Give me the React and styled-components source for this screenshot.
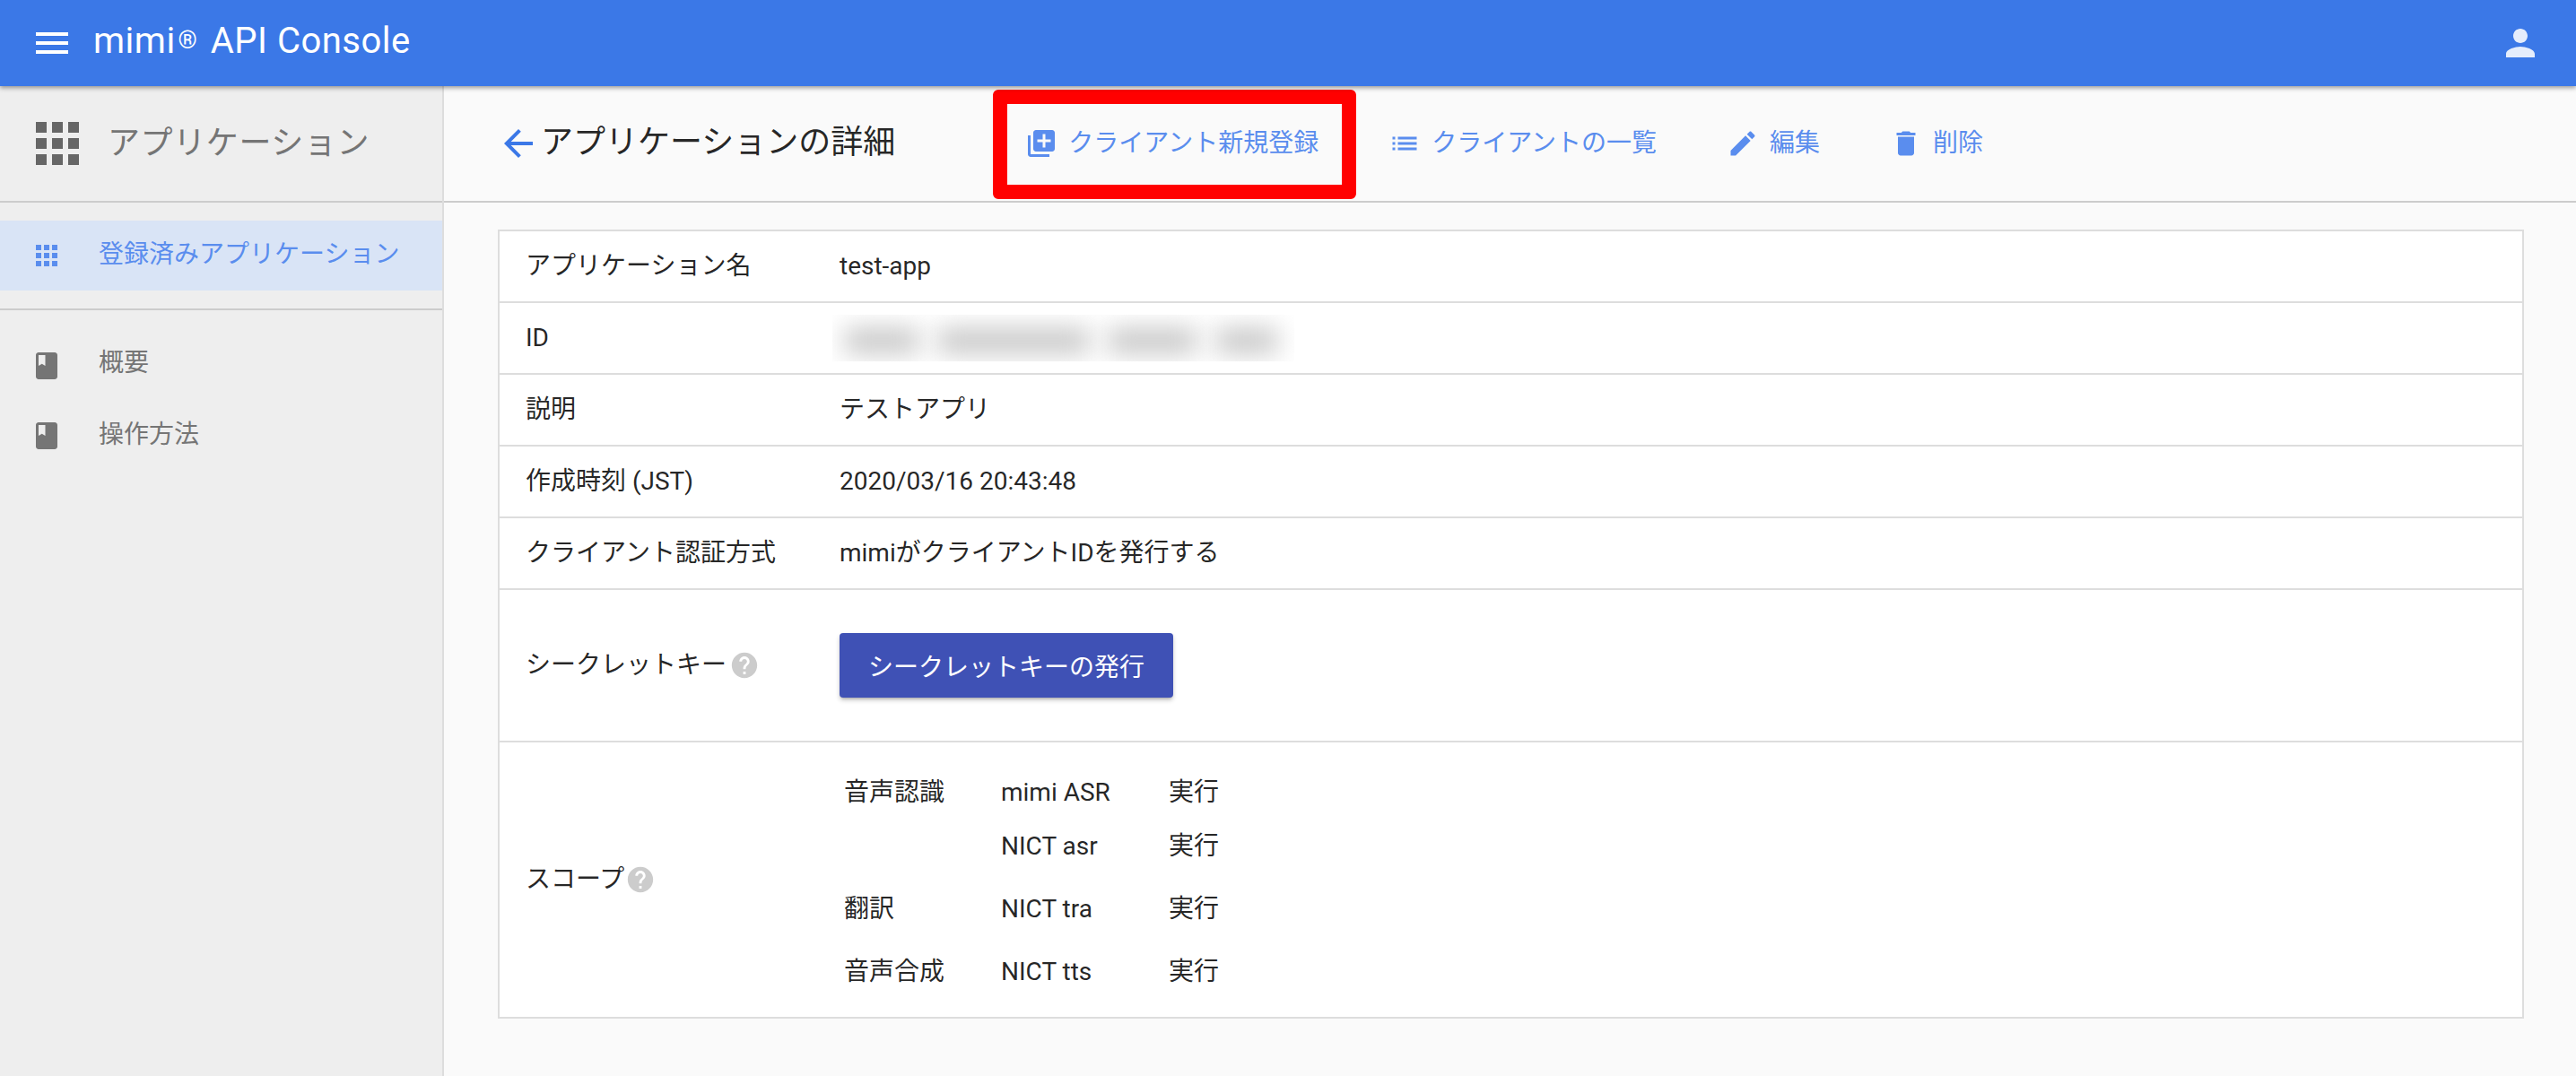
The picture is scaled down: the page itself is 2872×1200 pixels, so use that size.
import React from "react";
import styled, { createGlobalStyle } from "styled-components";

const P = {
  menu: "M3 18h18v-2H3v2zm0-5h18v-2H3v2zm0-7v2h18V6H3z",
  person: "M12 12c2.21 0 4-1.79 4-4s-1.79-4-4-4-4 1.79-4 4 1.79 4 4 4zm0 2c-2.67 0-8 1.34-8 4v2h16v-2c0-2.66-5.33-4-8-4z",
  apps: "M4 8h4V4H4v4zm6 12h4v-4h-4v4zm-6 0h4v-4H4v4zm0-6h4v-4H4v4zm6 0h4v-4h-4v4zm6-10v4h4V4h-4zm-6 4h4V4h-4v4zm6 6h4v-4h-4v4zm0 6h4v-4h-4v4z",
  book: "M18 2H6c-1.1 0-2 .9-2 2v16c0 1.1.9 2 2 2h12c1.1 0 2-.9 2-2V4c0-1.1-.9-2-2-2zM6 4h5v8l-2.5-1.5L6 12V4z",
  back: "M20 11H7.83l5.59-5.59L12 4l-8 8 8 8 1.41-1.41L7.83 13H20v-2z",
  add: "M4 6H2v14c0 1.1.9 2 2 2h14v-2H4V6zm16-4H8c-1.1 0-2 .9-2 2v12c0 1.1.9 2 2 2h12c1.1 0 2-.9 2-2V4c0-1.1-.9-2-2-2zm-1 9h-4v4h-2v-4H9V9h4V5h2v4h4v2z",
  list: "M3 13h2v-2H3v2zm0 4h2v-2H3v2zm0-8h2V7H3v2zm4 4h14v-2H7v2zm0 4h14v-2H7v2zM7 7v2h14V7H7z",
  edit: "M3 17.25V21h3.75L17.81 9.94l-3.75-3.75L3 17.25zM20.71 7.04c.39-.39.39-1.02 0-1.41l-2.34-2.34c-.39-.39-1.02-.39-1.41 0l-1.83 1.83 3.75 3.75 1.83-1.83z",
  del: "M6 19c0 1.1.9 2 2 2h8c1.1 0 2-.9 2-2V7H6v12zM19 4h-3.5l-1-1h-5l-1 1H5v2h14V4z",
  help: "M12 2C6.48 2 2 6.48 2 12s4.48 10 10 10 10-4.48 10-10S17.52 2 12 2zm1 17h-2v-2h2v2zm2.07-7.75l-.9.92C13.45 12.9 13 13.5 13 15h-2v-.5c0-1.1.45-2.1 1.17-2.83l1.24-1.26c.37-.36.59-.86.59-1.41 0-1.1-.9-2-2-2s-2 .9-2 2H8c0-2.21 1.79-4 4-4s4 1.79 4 4c0 .88-.36 1.68-.93 2.25z",
};

const BLUE = "#5a8dee";
const INK = "rgba(0,0,0,.87)";
const GREY = "#757575";

const Global = createGlobalStyle`
  html, body { margin: 0; padding: 0; background: #fafafa; }
  body { font-family: Roboto, "Noto Sans CJK JP", sans-serif; font-size: 28px; color: ${INK}; }
`;

const Svg = styled.svg`
  flex: none;
  display: block;
  width: ${(p) => p.$size}px;
  height: ${(p) => p.$size}px;
  fill: ${(p) => p.$color};
`;
const Icon = ({ d, size = 36, color = BLUE }) => (
  <Svg viewBox="0 0 24 24" $size={size} $color={color}>
    <path d={d} />
  </Svg>
);

const Page = styled.div`
  min-height: 1200px;
  display: flex;
  flex-direction: column;
`;
const AppBar = styled.header`
  height: 96px;
  flex: none;
  padding: 0 38px 0 34px;
  background: #3b78e7;
  box-shadow: 0 2px 5px rgba(0, 0, 0, 0.4);
  display: flex;
  align-items: center;
  position: relative;
  z-index: 2;
`;
const BrandTitle = styled.h1`
  flex: 1;
  margin: 0 0 0 22px;
  font-size: 40px;
  font-weight: 400;
  line-height: 48px;
  letter-spacing: 0.5px;
  color: #fff;
`;
const Registered = styled.span`
  font-size: 27px;
  margin: 0 4px 0 3px;
  position: relative;
  top: -5px;
`;
const Body = styled.div`
  flex: 1;
  display: flex;
`;
const Sidebar = styled.aside`
  width: 495px;
  flex: none;
  box-sizing: border-box;
  background: #eeeeee;
  border-right: 2px solid #dddddd;
`;
const SideHead = styled.div`
  height: 130px;
  box-sizing: border-box;
  border-bottom: 2px solid #cccccc;
  padding-left: 28px;
  display: flex;
  align-items: center;
  gap: 20px;
`;
const SideTitle = styled.span`
  font-size: 36px;
  line-height: 48px;
  letter-spacing: 0.6px;
  color: ${GREY};
`;
const NavGroup = styled.nav`
  padding: ${(p) => p.$pad};
  border-bottom: ${(p) => (p.$rule ? "2px solid #cccccc" : "none")};
`;
const NavItem = styled.div`
  height: 78px;
  padding-left: 34px;
  display: flex;
  align-items: center;
  gap: 40px;
  background: ${(p) => (p.$active ? "#d9e4f6" : "transparent")};
  color: ${(p) => (p.$active ? BLUE : GREY)};
`;
const NavLabel = styled.span`
  line-height: 36px;
  position: relative;
  top: ${(p) => p.$lift}px;
`;
const Main = styled.main`
  flex: 1;
  min-width: 0;
`;
const Toolbar = styled.div`
  height: 130px;
  box-sizing: border-box;
  border-bottom: 2px solid #cccccc;
  padding-left: 59px;
  display: flex;
  align-items: center;
`;
const PageTitle = styled.h2`
  margin: 0 0 0 1px;
  font-size: 36px;
  font-weight: 400;
  line-height: 48px;
  color: ${INK};
  position: relative;
  top: -1px;
`;
const Actions = styled.div`
  margin-left: 145px;
  display: flex;
  align-items: center;
  gap: 78px;
`;
const Action = styled.div`
  position: relative;
  display: flex;
  align-items: center;
  gap: 12px;
  color: ${BLUE};
  line-height: 36px;
  white-space: nowrap;
`;
const ActionLabel = styled.span`
  display: block;
`;
const Callout = styled.div`
  position: absolute;
  left: -36px;
  right: -42px;
  top: -42px;
  bottom: -44px;
  border: 16px solid #ff0000;
  border-radius: 6px;
  pointer-events: none;
`;
const Sheet = styled.section`
  margin: 30px 58px 0 60px;
  border: 2px solid #dddddd;
  background: #ffffff;
`;
const Row = styled.div`
  height: ${(p) => p.$h || 78}px;
  display: flex;
  align-items: center;
  & + & {
    border-top: 2px solid #dddddd;
  }
`;
const Label = styled.div`
  width: 350px;
  flex: none;
  margin-left: 29px;
  display: flex;
  align-items: center;
  line-height: 36px;
  white-space: nowrap;
`;
const Hint = styled.span`
  display: block;
  margin-left: ${(p) => p.$gap}px;
`;
const Value = styled.div`
  line-height: 36px;
  white-space: nowrap;
`;
const Smudge = styled.div`
  width: 515px;
  height: 52px;
  margin: 0 0 0 -8px;
  background: #ffffff;
  overflow: hidden;
  display: flex;
  align-items: center;
  gap: 22px;
  padding-left: 14px;
  box-sizing: border-box;
`;
const Blot = styled.span`
  display: block;
  flex: none;
  width: ${(p) => p.$w}px;
  height: 28px;
  margin-top: 6px;
  background: #c6c6c6;
  filter: blur(14px);
`;
const PrimaryButton = styled.button`
  height: 72px;
  padding: 0 32px;
  border: 0;
  border-radius: 4px;
  background: #3f51b5;
  color: #fff;
  font: inherit;
  font-size: 28px;
  box-shadow: 0 3px 3px -2px rgba(0, 0, 0, 0.2), 0 3px 5px rgba(0, 0, 0, 0.2);
`;
const Scopes = styled.div`
  margin-left: 5px;
  display: flex;
  flex-direction: column;
  gap: 10px;
  padding-top: 6px;
`;
const ScopeGroup = styled.div`
  display: grid;
  grid-template-columns: 175px 187px auto;
  grid-auto-rows: 60px;
  align-items: center;
  line-height: 36px;
  white-space: nowrap;
`;

const rows = [
  ["アプリケーション名", "test-app"],
  ["ID", null],
  ["説明", "テストアプリ"],
  ["作成時刻 (JST)", "2020/03/16 20:43:48"],
  ["クライアント認証方式", "mimiがクライアントIDを発行する"],
];

export default function App() {
  return (
    <Page>
      <Global />
      <AppBar>
        <Icon d={P.menu} size={48} color="#fff" />
        <BrandTitle>
          mimi<Registered>®</Registered> API Console
        </BrandTitle>
        <Icon d={P.person} size={48} color="rgba(255,255,255,.87)" />
      </AppBar>
      <Body>
        <Sidebar>
          <SideHead>
            <Icon d={P.apps} size={72} color="#666666" />
            <SideTitle>アプリケーション</SideTitle>
          </SideHead>
          <NavGroup $pad="20px 0" $rule>
            <NavItem $active>
              <Icon d={P.apps} />
              <NavLabel $lift={-1}>登録済みアプリケーション</NavLabel>
            </NavItem>
          </NavGroup>
          <NavGroup $pad="23px 0 0">
            <NavItem>
              <Icon d={P.book} color="#757575" />
              <NavLabel $lift={-3}>概要</NavLabel>
            </NavItem>
            <NavItem>
              <Icon d={P.book} color="#757575" />
              <NavLabel $lift={-1}>操作方法</NavLabel>
            </NavItem>
          </NavGroup>
        </Sidebar>
        <Main>
          <Toolbar>
            <Icon d={P.back} size={48} color="#3b78e7" />
            <PageTitle>アプリケーションの詳細</PageTitle>
            <Actions>
              <Action>
                <Icon d={P.add} />
                <ActionLabel>クライアント新規登録</ActionLabel>
                <Callout />
              </Action>
              <Action>
                <Icon d={P.list} />
                <ActionLabel>クライアントの一覧</ActionLabel>
              </Action>
              <Action>
                <Icon d={P.edit} />
                <ActionLabel>編集</ActionLabel>
              </Action>
              <Action>
                <Icon d={P.del} />
                <ActionLabel>削除</ActionLabel>
              </Action>
            </Actions>
          </Toolbar>
          <Sheet>
            {rows.map(([k, v]) => (
              <Row key={k}>
                <Label>{k}</Label>
                {v ? (
                  <Value>{v}</Value>
                ) : (
                  <Smudge>
                    <Blot $w={82} />
                    <Blot $w={168} />
                    <Blot $w={98} />
                    <Blot $w={68} />
                  </Smudge>
                )}
              </Row>
            ))}
            <Row $h={168}>
              <Label>
                シークレットキー
                <Hint $gap={3}>
                  <Icon d={P.help} size={34} color="#cccccc" />
                </Hint>
              </Label>
              <PrimaryButton>シークレットキーの発行</PrimaryButton>
            </Row>
            <Row $h={306}>
              <Label>
                スコープ
                <Hint $gap={1}>
                  <Icon d={P.help} size={34} color="#cccccc" />
                </Hint>
              </Label>
              <Scopes>
                <ScopeGroup>
                  <span>音声認識</span>
                  <span>mimi ASR</span>
                  <span>実行</span>
                  <span />
                  <span>NICT asr</span>
                  <span>実行</span>
                </ScopeGroup>
                <ScopeGroup>
                  <span>翻訳</span>
                  <span>NICT tra</span>
                  <span>実行</span>
                </ScopeGroup>
                <ScopeGroup>
                  <span>音声合成</span>
                  <span>NICT tts</span>
                  <span>実行</span>
                </ScopeGroup>
              </Scopes>
            </Row>
          </Sheet>
        </Main>
      </Body>
    </Page>
  );
}
